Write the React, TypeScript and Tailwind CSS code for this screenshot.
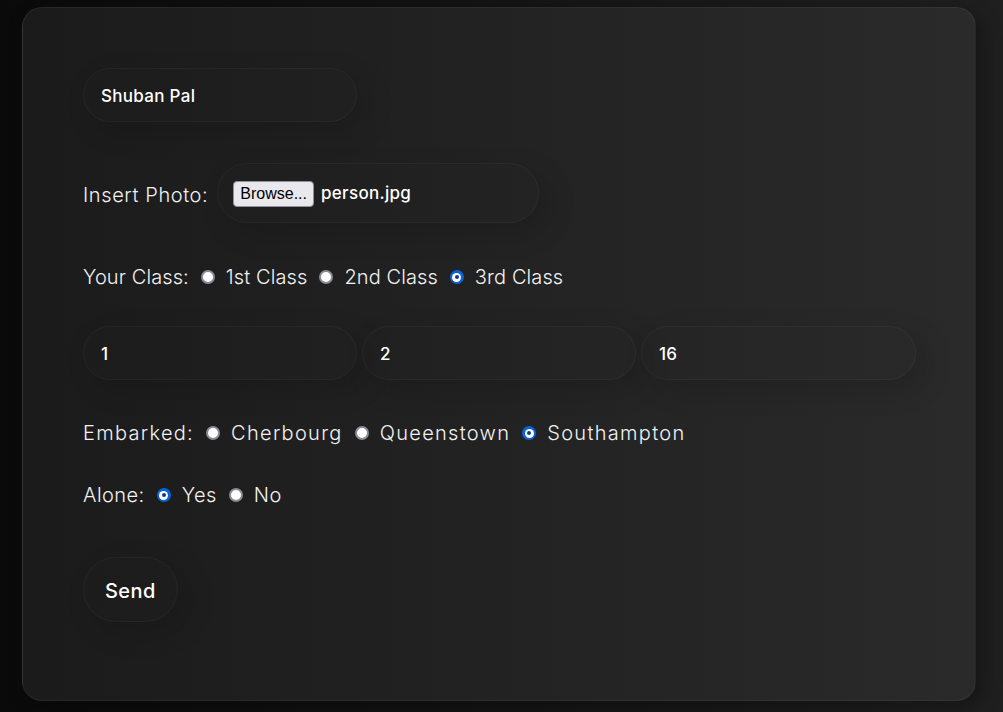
import React from "react";

const font = { fontFamily: '"Inter", "Noto Sans", sans-serif' };

function Radio({ checked }: { checked?: boolean }) {
  if (checked) {
    return (
      <span className="flex h-[14px] w-[14px] shrink-0 items-center justify-center rounded-full bg-[#0b62d8]">
        <span className="flex h-[9px] w-[9px] items-center justify-center rounded-full bg-white">
          <span className="h-[4px] w-[4px] rounded-full bg-[#123a80]" />
        </span>
      </span>
    );
  }
  return (
    <span className="block h-[14px] w-[14px] shrink-0 rounded-full border-2 border-[#8a8a96] bg-white" />
  );
}

function Pill({ value, w = "w-[274px]" }: { value: string; w?: string }) {
  return (
    <div
      className={`${w} flex h-[54px] items-center rounded-full border border-white/[0.035] pl-[17px] pt-[3px] text-[17px] font-medium tracking-[0.3px] text-white shadow-[10px_10px_30px_rgba(0,0,0,0.14)]`}
    >
      {value}
    </div>
  );
}

function RadioRow({
  label,
  options,
  checked,
  tracking,
}: {
  label: string;
  options: string[];
  checked: number;
  tracking: string;
}) {
  return (
    <div className={`flex h-[24px] items-center text-[20px] font-light text-[#f2f2f2] ${tracking}`}>
      <span>{label}</span>
      {options.map((o, i) => (
        <span key={o} className="flex items-center">
          <span className="ml-[12px] flex items-center">
            <Radio checked={i === checked} />
          </span>
          <span className="ml-[11px]">{o}</span>
        </span>
      ))}
    </div>
  );
}

export default function App() {
  return (
    <div
      className="h-[712px] w-full overflow-hidden bg-gradient-to-r from-[#0a0a0a] to-[#1f1f1f] pl-[22px] pt-[7px]"
      style={font}
    >
      <div className="h-[694px] w-[954px] rounded-[20px] border border-white/[0.05] bg-gradient-to-r from-[#1b1b1b] to-[#2a2a2a] pl-[60px] pt-[60px] shadow-[6px_6px_20px_rgba(0,0,0,0.3)]">
        <Pill value="Shuban Pal" />

        <div className="mt-[41px] flex items-center">
          <span className="pt-[3px] text-[20px] font-light tracking-[0.6px] text-[#f2f2f2]">Insert Photo:</span>
          <div className="ml-[9px] flex h-[60px] w-[322px] items-center rounded-full border border-white/[0.035] pl-[15px] pt-[2px] shadow-[10px_10px_30px_rgba(0,0,0,0.14)]">
            <button
              className="flex h-[26px] items-center rounded-[4px] border border-[#8f8f9d] bg-[#e9e9ed] px-[6px] text-[16px] text-black"
              style={{ fontFamily: '"Liberation Sans", Arial, sans-serif' }}
            >
              Browse...
            </button>
            <span className="ml-[7px] text-[17px] font-medium tracking-[0.3px] text-white">person.jpg</span>
          </div>
        </div>

        <div className="mt-[42px]">
          <RadioRow
            label="Your Class:"
            options={["1st Class", "2nd Class", "3rd Class"]}
            checked={2}
            tracking="tracking-[0.1px]"
          />
        </div>

        <div className="mt-[37px] flex gap-[5px]">
          <Pill value="1" />
          <Pill value="2" />
          <Pill value="16" w="w-[275px]" />
        </div>

        <div className="mt-[41px]">
          <RadioRow
            label="Embarked:"
            options={["Cherbourg", "Queenstown", "Southampton"]}
            checked={2}
            tracking="tracking-[1.3px]"
          />
        </div>

        <div className="mt-[38px]">
          <RadioRow
            label="Alone:"
            options={["Yes", "No"]}
            checked={0}
            tracking="tracking-[0.45px]"
          />
        </div>

        <button className="mt-[50px] flex h-[65px] items-center rounded-full border border-white/[0.035] px-[21px] pt-[2px] text-[20px] font-medium tracking-[0.4px] text-white shadow-[10px_10px_30px_rgba(0,0,0,0.14)]">
          Send
        </button>
      </div>
    </div>
  );
}
